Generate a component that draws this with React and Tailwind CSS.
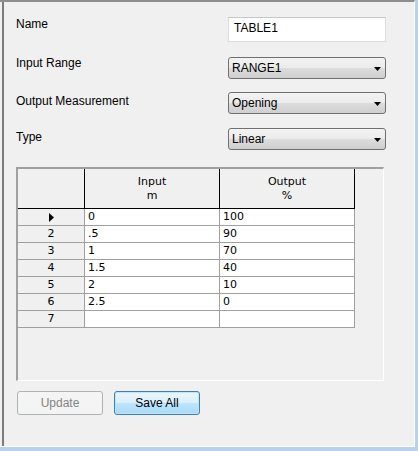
import React from "react";

const rows = [
  { head: "arrow", input: "0", output: "100" },
  { head: "2", input: ".5", output: "90" },
  { head: "3", input: "1", output: "70" },
  { head: "4", input: "1.5", output: "40" },
  { head: "5", input: "2", output: "10" },
  { head: "6", input: "2.5", output: "0" },
  { head: "7", input: "", output: "" },
];

function Dropdown({ value }) {
  return (
    <div className="w-[158px] h-[22px] flex items-start justify-between border border-[#707070] rounded-[3px] bg-[linear-gradient(#f3f3f3_0%,#ebebeb_50%,#dddddd_50%,#cfcfcf_100%)] pl-[3px] pr-[4px] pt-[2px] text-black">
      <span className="leading-[16px]">{value}</span>
      <svg width="7" height="4" viewBox="0 0 7 4" className="mt-[7px]">
        <polygon points="0,0 7,0 3.5,4" fill="#000" />
      </svg>
    </div>
  );
}

export default function App() {
  return (
    <div className="w-[418px] h-[451px] bg-[#b9d1ea] text-[12px] font-['Liberation_Sans',Arial,sans-serif]">
      <div className="w-[415px] h-[447px] bg-[#f0f0f0] border-t-2 border-[#8e8e8e] border-r border-r-white border-b border-b-white pl-[2px]">
        <div className="h-full border-l-2 border-[#7c7c7c] pl-[12px] pt-[14px]">
          {/* Form rows */}
          <div className="flex h-[26px]">
            <div className="w-[212px] leading-[16px] text-black">Name</div>
            <div className="mt-[1px] w-[158px] h-[25px] bg-white border border-[#dadee3] border-t-[#c4c8cd] pl-[5px] pt-[2px] leading-[16px] text-black">
              TABLE1
            </div>
          </div>

          <div className="flex mt-[13px]">
            <div className="w-[212px] leading-[16px] text-black">Input Range</div>
            <div className="mt-[2px]">
              <Dropdown value="RANGE1" />
            </div>
          </div>

          <div className="flex mt-[13px]">
            <div className="w-[212px] mt-[1px] leading-[16px] text-black">Output Measurement</div>
            <Dropdown value="Opening" />
          </div>

          <div className="flex mt-[14px]">
            <div className="w-[212px] mt-[1px] leading-[16px] text-black">Type</div>
            <Dropdown value="Linear" />
          </div>

          {/* Grid */}
          <div className="mt-[17px] w-[368px] h-[214px] border-t-2 border-l-2 border-[#a0a0a0] border-r border-r-white border-b border-b-white bg-[#f0f0f0] text-[11px] font-['DejaVu_Sans',Tahoma,sans-serif] text-black">
            <div className="flex h-[40px] w-[337px] border-b border-black">
              <div className="w-[67px] border-r border-black" />
              <div className="w-[135px] border-r border-black flex flex-col items-center justify-center leading-[14px]">
                <span>Input</span>
                <span>m</span>
              </div>
              <div className="w-[135px] border-r border-black flex flex-col items-center justify-center leading-[14px]">
                <span>Output</span>
                <span>%</span>
              </div>
            </div>
            {rows.map((r, i) => (
              <div key={i} className="flex h-[17px] w-[337px] border-b border-[#a0a0a0]">
                <div className="w-[67px] border-r border-[#a0a0a0] flex items-center justify-center leading-[16px]">
                  {r.head === "arrow" ? (
                    <svg width="5" height="9" viewBox="0 0 5 9">
                      <polygon points="0,0 5,4.5 0,9" fill="#000" />
                    </svg>
                  ) : (
                    r.head
                  )}
                </div>
                <div className="w-[135px] border-r border-[#a0a0a0] bg-white pl-[3px] leading-[16px]">
                  {r.input}
                </div>
                <div className="w-[135px] border-r border-[#a0a0a0] bg-white pl-[3px] leading-[16px]">
                  {r.output}
                </div>
              </div>
            ))}
          </div>

          {/* Buttons */}
          <div className="flex gap-[11px] mt-[10px] ml-[1px]">
            <button className="w-[86px] h-[24px] rounded-[3px] border border-[#adb2b5] bg-[#f4f4f4] text-[#838383] leading-[16px]">
              Update
            </button>
            <button className="w-[86px] h-[24px] rounded-[3px] border border-[#3c7fb1] bg-[linear-gradient(#eaf6fd_0%,#d9f0fc_50%,#bee6fd_50%,#a7d9f5_100%)] shadow-[inset_0_0_0_1px_#c2e6f9] text-black leading-[16px]">
              Save All
            </button>
          </div>
        </div>
      </div>
    </div>
  );
}
